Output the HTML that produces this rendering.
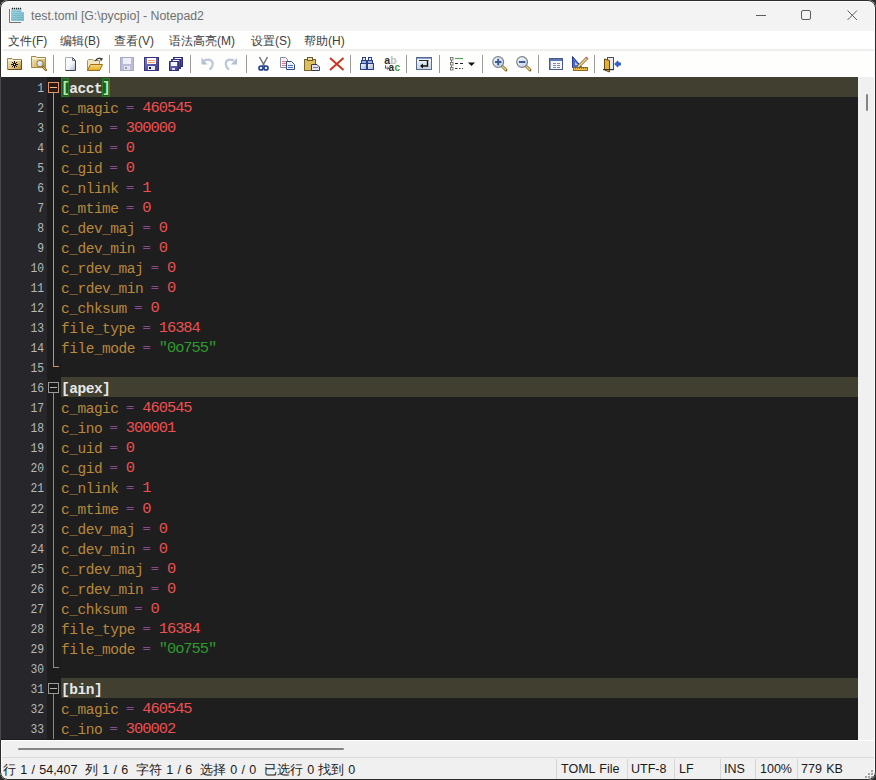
<!DOCTYPE html>
<html><head><meta charset="utf-8">
<style>
html,body{margin:0;padding:0;width:876px;height:780px;overflow:hidden;background:#2a2a2a;}
*{box-sizing:border-box;}
#frame{position:absolute;left:0;top:0;width:876px;height:780px;border:1px solid #2c2c2c;border-radius:8px;pointer-events:none;box-shadow:0 0 0 12px #2a2a2a;}
#win{position:absolute;left:0;top:0;width:876px;height:780px;overflow:hidden;background:#f0f0f0;font-family:"Liberation Sans",sans-serif;}
#title{position:absolute;left:0;top:0;width:876px;height:31px;background:#f3f3f3;}
#title .t{position:absolute;left:31px;top:9px;font-size:12.3px;color:#707070;white-space:nowrap;}
#menu{position:absolute;left:0;top:31px;width:876px;height:20px;background:#ffffff;border-bottom:2px solid #efefef;}
#menu span{position:absolute;top:2px;font-size:12px;color:#3c3c3c;white-space:nowrap;}
#tb{position:absolute;left:0;top:51px;width:876px;height:26px;background:#fefefd;}
#ed{position:absolute;left:1px;top:77px;width:857px;height:663px;background:#1e1e1e;overflow:hidden;}
#ln{position:absolute;left:0;top:0;width:46px;height:663px;background:#27272b;}
#fm{position:absolute;left:46px;top:0;width:14px;height:663px;background:#1c1c1c;}
.line{position:absolute;left:60px;height:20px;width:797px;font-family:"Liberation Mono",monospace;font-size:14.5px;letter-spacing:-0.48px;line-height:24px;white-space:pre;color:#c8883a;}
.num{position:absolute;left:0;width:43px;text-align:right;height:20px;font-family:"Liberation Mono",monospace;font-size:12.6px;line-height:24px;color:#b8b8b8;transform:scaleX(0.9);transform-origin:right center;}
.sec{background:#403f30;}
.k{color:#b8883c}.e{color:#cc70dc;position:relative;left:-1px;top:-1px;display:inline-block;transform:scaleY(0.62);}.n{color:#ec5050;position:relative;left:-1px;top:-1px;font-size:15.4px;letter-spacing:-1.02px}.s{color:#2e9a2e;position:relative;left:-1px;top:-1px;font-size:15.4px;letter-spacing:-1.02px}.h{color:#e8e8e8;font-weight:bold}
.bm{display:inline-block;width:8.22px;letter-spacing:0;height:19px;vertical-align:top;margin-top:1px;line-height:21px;background:#235a23;box-shadow:inset 0 0 0 1px #2a7a2a;color:#a8f0a8;font-weight:bold;text-align:center;}
.fb{position:absolute;left:47px;width:11px;height:11px;border:1px solid #9a9a9a;background:#1a1a1a;}
.fb:after{content:"";position:absolute;left:1px;top:4px;width:7px;height:1px;background:#b0b0b0;}
.fb.cur{border-color:#e0945e;background:#2a1c14;}
.fb.cur:after{background:#f0b890;}
.fl{position:absolute;left:52px;width:1px;}
.ft{position:absolute;left:52px;width:6px;height:1px;}
#vsb{position:absolute;left:858px;top:77px;width:18px;height:663px;background:#f0f0f0;}
#vthumb{position:absolute;left:8px;top:17px;width:2px;height:17px;background:#858585;border-radius:1px;}
#hsb{position:absolute;left:0;top:740px;width:876px;height:18px;background:#f0f0f0;}
#hthumb{position:absolute;left:18px;top:8px;width:326px;height:2px;background:#858585;border-radius:1px;}
#status{position:absolute;left:0;top:757px;width:876px;height:23px;background:#f0f0f0;border-top:1px solid #dadada;}
#status span{position:absolute;top:4px;font-size:12.5px;word-spacing:0.8px;color:#1a1a1a;white-space:nowrap;}
#status i{position:absolute;top:1px;width:1px;height:21px;background:#d6d6d6;}
</style></head><body>
<div id="win">
 <div id="title"><div class="t">test.toml [G:\pycpio] - Notepad2</div></div>
 <div id="menu">
  <span style="left:8px">文件(F)</span>
  <span style="left:60px">编辑(B)</span>
  <span style="left:114px">查看(V)</span>
  <span style="left:169px">语法高亮(M)</span>
  <span style="left:251px">设置(S)</span>
  <span style="left:304px">帮助(H)</span>
 </div>
 <div id="tb"></div>
 <div id="ed">
  <div id="ln"></div><div id="fm"></div>
<div class="num" style="top:0px">1</div>
<div class="line sec" style="top:0px"><span class="bm">[</span><span class="h">acct</span><span class="bm">]</span></div>
<div class="num" style="top:20px">2</div>
<div class="line" style="top:20px"><span class="k">c_magic</span> <span class="e">=</span> <span class="n">460545</span></div>
<div class="num" style="top:40px">3</div>
<div class="line" style="top:40px"><span class="k">c_ino</span> <span class="e">=</span> <span class="n">300000</span></div>
<div class="num" style="top:60px">4</div>
<div class="line" style="top:60px"><span class="k">c_uid</span> <span class="e">=</span> <span class="n">0</span></div>
<div class="num" style="top:80px">5</div>
<div class="line" style="top:80px"><span class="k">c_gid</span> <span class="e">=</span> <span class="n">0</span></div>
<div class="num" style="top:100px">6</div>
<div class="line" style="top:100px"><span class="k">c_nlink</span> <span class="e">=</span> <span class="n">1</span></div>
<div class="num" style="top:120px">7</div>
<div class="line" style="top:120px"><span class="k">c_mtime</span> <span class="e">=</span> <span class="n">0</span></div>
<div class="num" style="top:140px">8</div>
<div class="line" style="top:140px"><span class="k">c_dev_maj</span> <span class="e">=</span> <span class="n">0</span></div>
<div class="num" style="top:160px">9</div>
<div class="line" style="top:160px"><span class="k">c_dev_min</span> <span class="e">=</span> <span class="n">0</span></div>
<div class="num" style="top:180px">10</div>
<div class="line" style="top:180px"><span class="k">c_rdev_maj</span> <span class="e">=</span> <span class="n">0</span></div>
<div class="num" style="top:200px">11</div>
<div class="line" style="top:200px"><span class="k">c_rdev_min</span> <span class="e">=</span> <span class="n">0</span></div>
<div class="num" style="top:220px">12</div>
<div class="line" style="top:220px"><span class="k">c_chksum</span> <span class="e">=</span> <span class="n">0</span></div>
<div class="num" style="top:240px">13</div>
<div class="line" style="top:240px"><span class="k">file_type</span> <span class="e">=</span> <span class="n">16384</span></div>
<div class="num" style="top:260px">14</div>
<div class="line" style="top:260px"><span class="k">file_mode</span> <span class="e">=</span> <span class="s">"0o755"</span></div>
<div class="num" style="top:280px">15</div>
<div class="num" style="top:300px">16</div>
<div class="line sec" style="top:300px"><span class="h">[apex]</span></div>
<div class="num" style="top:320px">17</div>
<div class="line" style="top:320px"><span class="k">c_magic</span> <span class="e">=</span> <span class="n">460545</span></div>
<div class="num" style="top:340px">18</div>
<div class="line" style="top:340px"><span class="k">c_ino</span> <span class="e">=</span> <span class="n">300001</span></div>
<div class="num" style="top:360px">19</div>
<div class="line" style="top:360px"><span class="k">c_uid</span> <span class="e">=</span> <span class="n">0</span></div>
<div class="num" style="top:380px">20</div>
<div class="line" style="top:380px"><span class="k">c_gid</span> <span class="e">=</span> <span class="n">0</span></div>
<div class="num" style="top:400px">21</div>
<div class="line" style="top:400px"><span class="k">c_nlink</span> <span class="e">=</span> <span class="n">1</span></div>
<div class="num" style="top:421px">22</div>
<div class="line" style="top:421px"><span class="k">c_mtime</span> <span class="e">=</span> <span class="n">0</span></div>
<div class="num" style="top:441px">23</div>
<div class="line" style="top:441px"><span class="k">c_dev_maj</span> <span class="e">=</span> <span class="n">0</span></div>
<div class="num" style="top:461px">24</div>
<div class="line" style="top:461px"><span class="k">c_dev_min</span> <span class="e">=</span> <span class="n">0</span></div>
<div class="num" style="top:481px">25</div>
<div class="line" style="top:481px"><span class="k">c_rdev_maj</span> <span class="e">=</span> <span class="n">0</span></div>
<div class="num" style="top:501px">26</div>
<div class="line" style="top:501px"><span class="k">c_rdev_min</span> <span class="e">=</span> <span class="n">0</span></div>
<div class="num" style="top:521px">27</div>
<div class="line" style="top:521px"><span class="k">c_chksum</span> <span class="e">=</span> <span class="n">0</span></div>
<div class="num" style="top:541px">28</div>
<div class="line" style="top:541px"><span class="k">file_type</span> <span class="e">=</span> <span class="n">16384</span></div>
<div class="num" style="top:561px">29</div>
<div class="line" style="top:561px"><span class="k">file_mode</span> <span class="e">=</span> <span class="s">"0o755"</span></div>
<div class="num" style="top:581px">30</div>
<div class="num" style="top:601px">31</div>
<div class="line sec" style="top:601px"><span class="h">[bin]</span></div>
<div class="num" style="top:621px">32</div>
<div class="line" style="top:621px"><span class="k">c_magic</span> <span class="e">=</span> <span class="n">460545</span></div>
<div class="num" style="top:641px">33</div>
<div class="line" style="top:641px"><span class="k">c_ino</span> <span class="e">=</span> <span class="n">300002</span></div>
<div class="num" style="top:661px">34</div>
<div class="line" style="top:661px"><span class="k">c_uid</span> <span class="e">=</span> <span class="n">0</span></div>
<div class="fb cur" style="top:5px"></div>
<div class="fb" style="top:305px"></div>
<div class="fb" style="top:606px"></div>
<div class="fl" style="top:16px;height:274px;background:#dc8a5c"></div>
<div class="ft" style="top:289px;background:#dc8a5c"></div>
<div class="fl" style="top:316px;height:275px;background:#8a8a8a"></div>
<div class="ft" style="top:590px;background:#8a8a8a"></div>
<div class="fl" style="top:617px;height:83px;background:#8a8a8a"></div>

 </div>
 <div id="vsb"><div id="vthumb"></div></div>
 <div id="hsb"><div id="hthumb"></div></div>
 <div id="status">
  <span style="left:3px">行 1 / 54,407</span>
  <span style="left:85px">列 1 / 6</span>
  <span style="left:136px">字符 1 / 6</span>
  <span style="left:200px">选择 0 / 0</span>
  <span style="left:264px">已选行 0</span>
  <span style="left:318px">找到 0</span>
  <i style="left:556px"></i><i style="left:627px"></i><i style="left:674px"></i><i style="left:720px"></i><i style="left:755px"></i><i style="left:797px"></i>
  <span style="left:561px">TOML File</span>
  <span style="left:631px">UTF-8</span>
  <span style="left:679px">LF</span>
  <span style="left:724px">INS</span>
  <span style="left:760px">100%</span>
  <span style="left:801px">779 KB</span>
  <b style="position:absolute;left:871px;top:12px;width:2px;height:2px;background:#a4a4a4"></b><b style="position:absolute;left:868px;top:15px;width:2px;height:2px;background:#a4a4a4"></b><b style="position:absolute;left:871px;top:15px;width:2px;height:2px;background:#a4a4a4"></b><b style="position:absolute;left:865px;top:18px;width:2px;height:2px;background:#a4a4a4"></b><b style="position:absolute;left:868px;top:18px;width:2px;height:2px;background:#a4a4a4"></b><b style="position:absolute;left:871px;top:18px;width:2px;height:2px;background:#a4a4a4"></b>
 </div>
<svg id="icons" width="876" height="80" viewBox="0 0 876 80" style="position:absolute;left:0;top:0;">
<defs>
<linearGradient id="gFold" x1="0" y1="0" x2="1" y2="1"><stop offset="0" stop-color="#f4ebc4"/><stop offset="0.6" stop-color="#dcc27a"/><stop offset="1" stop-color="#b58a2c"/></linearGradient>
<linearGradient id="gFlap" x1="0" y1="0" x2="0" y2="1"><stop offset="0" stop-color="#f8dc7a"/><stop offset="1" stop-color="#e0a820"/></linearGradient>
<linearGradient id="gDoc" x1="0" y1="0" x2="1" y2="1"><stop offset="0" stop-color="#ffffff"/><stop offset="0.55" stop-color="#f2f4f8"/><stop offset="1" stop-color="#aab2c8"/></linearGradient>
<linearGradient id="gDisk" x1="0" y1="0" x2="1" y2="1"><stop offset="0" stop-color="#7c7cc8"/><stop offset="1" stop-color="#3a3a8c"/></linearGradient>
<linearGradient id="gLens" x1="0" y1="0" x2="1" y2="1"><stop offset="0" stop-color="#ffffff"/><stop offset="1" stop-color="#b8cce0"/></linearGradient>
<linearGradient id="gWin" x1="0" y1="0" x2="0" y2="1"><stop offset="0" stop-color="#f8fafd"/><stop offset="1" stop-color="#c6d2e6"/></linearGradient>
<linearGradient id="gNote" x1="0" y1="0" x2="1" y2="1"><stop offset="0" stop-color="#a8d8e4"/><stop offset="1" stop-color="#78bccc"/></linearGradient>
</defs>
<!-- title icon -->
<path d="M9.5 9 V22.5 H21" fill="none" stroke="#707070" stroke-width="1"/>
<rect x="10" y="9" width="1" height="13" fill="#ffffff"/>
<path d="M11 8 H21.5 V12 H24 V21 H11 Z" fill="url(#gNote)"/>
<path d="M11.5 11.5H21M11.5 13.5H23.5M11.5 15.5H23.5M11.5 17.5H23.5M11.5 19.5H23.5" stroke="#6aaabb" stroke-width="0.7" opacity="0.7"/>
<path d="M12 8.5h1M14 8.5h1M16 8.5h1M18 8.5h1M20 8.5h1" stroke="#222" stroke-width="1.4"/>
<!-- window buttons -->
<path d="M756 15.5H766" stroke="#5c5c5c" stroke-width="1"/>
<rect x="801.5" y="10.5" width="9" height="9" rx="1.5" fill="none" stroke="#5c5c5c" stroke-width="1"/>
<path d="M847.5 10.5L857 20M857 10.5L847.5 20" stroke="#5c5c5c" stroke-width="1"/>

<!-- 1 folder star -->
<path d="M7.5 69.5 V58.5 H12 L13 59.5 H21.5 V69.5 Z" fill="url(#gFold)" stroke="#a08850"/>
<path d="M8 60.5H21" stroke="#fff8e0" stroke-width="1"/>
<path d="M8 69.5H21.5V60" fill="none" stroke="#6a5020" stroke-width="1"/>
<path d="M14 61h1v1h-1zM14 62h1v1h-1zM14 63h1v1h-1zM14 64h1v1h-1zM14 65h1v1h-1zM14 66h1v1h-1zM14 67h1v1h-1zM11 64h1v1h-1zM12 64h1v1h-1zM13 64h1v1h-1zM14 64h1v1h-1zM15 64h1v1h-1zM16 64h1v1h-1zM17 64h1v1h-1zM12 62h1v1h-1zM13 63h1v1h-1zM15 65h1v1h-1zM16 66h1v1h-1zM16 62h1v1h-1zM15 63h1v1h-1zM13 65h1v1h-1zM12 66h1v1h-1z" fill="#1a1208"/>
<rect x="14" y="64" width="1" height="1" fill="#fff"/>
<!-- 2 folder search -->
<path d="M31.5 67.5 V56.5 H36 L37 57.5 H45.5 V67.5 Z" fill="url(#gFold)" stroke="#a08850"/>
<path d="M32 58.5H45" stroke="#fff8e0" stroke-width="1"/>
<path d="M42.8 66.8 L46 70" stroke="#8a6a18" stroke-width="2.4" stroke-linecap="round"/>
<path d="M43 67 L45.6 69.6" stroke="#e8d080" stroke-width="1"/>
<circle cx="40" cy="63.6" r="3.1" fill="url(#gLens)" stroke="#9a8048" stroke-width="1.1"/>
<!-- sep -->
<rect x="53" y="55" width="1" height="18" fill="#9a9a9a"/>
<!-- 3 new doc -->
<path d="M65.5 70.5 V57.5 H72.5 L75.5 60.5 V70.5 Z" fill="url(#gDoc)"/>
<path d="M65.5 70.5 V57.5 H72.5" fill="none" stroke="#a8acb4"/>
<path d="M72.5 57.5 L75.5 60.5 V70.5 H65.5" fill="none" stroke="#3a4050"/>
<path d="M72.5 58 V60.5 H75" fill="none" stroke="#6a7080"/>
<!-- 4 open folder -->
<path d="M87.5 70.5 V60.5 L88.5 59.5 H92.5 L93.5 60.5 H99.5 V70.5 Z" fill="#f2e6c0" stroke="#a09470"/>
<path d="M87.5 70.5 L90.5 64.5 H102.5 L99.5 70.5 Z" fill="url(#gFlap)" stroke="#9a7020"/>
<path d="M95.5 61 Q97 57.5 100.5 58.5" fill="none" stroke="#3a3a3a" stroke-width="1.2"/>
<path d="M99.5 57.5 L103 58.5 L101 61.5 Z" fill="#3a3a3a"/>
<!-- sep -->
<rect x="109" y="55" width="1" height="18" fill="#9a9a9a"/>
<!-- 7 save disabled -->
<rect x="120.5" y="57.5" width="13" height="13" fill="#bcbcd6" stroke="#a8a8c8"/>
<rect x="123" y="58" width="8" height="6" fill="#eeeef6"/>
<rect x="124" y="66" width="6" height="4" fill="#e4e4ee"/>
<rect x="125" y="67" width="2" height="2" fill="#9a9ab4"/>
<!-- 8 save -->
<rect x="144.5" y="57.5" width="14" height="13" fill="url(#gDisk)" stroke="#34347c"/>
<rect x="147" y="58" width="9" height="6" fill="#fffaf4"/>
<path d="M148 60.5H155M148 62.5H155" stroke="#e8a070" stroke-width="1"/>
<rect x="148" y="66" width="7" height="4" fill="#e8e8f4"/>
<rect x="149" y="67" width="2" height="2" fill="#101030"/>
<!-- 9 save all -->
<rect x="173.5" y="57.5" width="9" height="9" fill="url(#gDisk)" stroke="#303078"/>
<rect x="171.5" y="59.5" width="9" height="9" fill="url(#gDisk)" stroke="#303078"/>
<rect x="169.5" y="61.5" width="9" height="9" fill="url(#gDisk)" stroke="#303078"/>
<rect x="171" y="62" width="6" height="4" fill="#f4f4fa"/>
<rect x="175" y="58" width="6" height="1" fill="#f4f4fa"/>
<rect x="173" y="60" width="6" height="1" fill="#f4f4fa"/>
<rect x="172" y="68" width="3" height="2" fill="#d8d8ec"/>
<!-- sep -->
<rect x="190" y="55" width="1" height="18" fill="#9a9a9a"/>
<!-- 11 undo -->
<path d="M204 60.5 Q210 58 212.5 62 Q213.5 66.5 209.5 69.5" fill="none" stroke="#bcc6d8" stroke-width="2.2"/>
<path d="M201.5 57.5 V64.5 H207.5 Z" fill="#b4c0d6"/>
<!-- 12 redo -->
<path d="M234 60.5 Q228 58 226 62 Q225 66.5 229 69.5" fill="none" stroke="#bcc6d8" stroke-width="2.2"/>
<path d="M237 58 V64.5 H231 Z" fill="#b4c0d6"/>
<!-- sep -->
<rect x="246" y="55" width="1" height="18" fill="#9a9a9a"/>
<!-- 14 cut -->
<path d="M259.5 57 L264.5 66 M267.5 57 L262.5 66" stroke="#6a6a72" stroke-width="1.4"/>
<circle cx="261" cy="68" r="2.1" fill="#dfe8f6" stroke="#1e3a8a" stroke-width="1.5"/>
<circle cx="266" cy="68" r="2.1" fill="#dfe8f6" stroke="#1e3a8a" stroke-width="1.5"/>
<!-- 15 copy -->
<path d="M280.5 57.5 H285.5 L287.5 59.5 V67.5 H280.5 Z" fill="#f6f2f2" stroke="#8a8aa0"/>
<path d="M282 61.5H286M282 63.5H286M282 65.5H286" stroke="#e07070" stroke-width="0.9"/>
<path d="M286.5 61.5 H291.5 L294.5 64.5 V69.5 H286.5 Z" fill="#eef2fa" stroke="#2e4a8e"/>
<path d="M288 65.5H293M288 67.5H293" stroke="#3a62b0" stroke-width="0.9"/>
<!-- 16 paste -->
<rect x="304.5" y="59.5" width="11" height="11" fill="#dcc060" stroke="#7a6428"/>
<rect x="307.5" y="57.5" width="5" height="3" fill="#f0e2a8" stroke="#6a5a30"/>
<path d="M311.5 64.5 H317 L319.5 67 V70.5 H311.5 Z" fill="#dde2ee" stroke="#3a3a48"/>
<path d="M313 67.5H318" stroke="#6070a0" stroke-width="0.9"/>
<!-- 17 delete -->
<path d="M330 58 L343.5 70 M343.5 58 L330 70" stroke="#d0301e" stroke-width="1.9"/>
<!-- sep -->
<rect x="350" y="55" width="1" height="18" fill="#9a9a9a"/>
<!-- 19 find -->
<linearGradient id="gBino" x1="0" y1="0" x2="1" y2="1"><stop offset="0" stop-color="#ffffff"/><stop offset="1" stop-color="#98acdc"/></linearGradient>
<rect x="362.5" y="57.5" width="3" height="3" fill="#e4ecfa" stroke="#2a3e86"/>
<rect x="368.5" y="57.5" width="3" height="3" fill="#e4ecfa" stroke="#2a3e86"/>
<rect x="361.5" y="60.5" width="5" height="3" fill="#9ab0e0" stroke="#2a3e86"/>
<rect x="367.5" y="60.5" width="5" height="3" fill="#9ab0e0" stroke="#2a3e86"/>
<rect x="360.5" y="63.5" width="6" height="6" fill="url(#gBino)" stroke="#2a3e86"/>
<rect x="367.5" y="63.5" width="6" height="6" fill="url(#gBino)" stroke="#2a3e86"/>
<rect x="366" y="62" width="2" height="2" fill="#2a3e86"/>
<!-- 20 replace -->
<text x="384.2" y="64" font-family="Liberation Sans" font-size="10.5" font-weight="bold" fill="#303030">a</text>
<text x="390.2" y="64" font-family="Liberation Sans" font-size="10.5" font-weight="bold" fill="#c0c0c0">b</text>
<path d="M385.5 65.3 V68.2 H388" fill="none" stroke="#404040" stroke-width="0.9"/>
<path d="M387.3 66.9 L388.8 68.2 L387.3 69.5" fill="none" stroke="#404040" stroke-width="0.9"/>
<text x="388.6" y="70.8" font-family="Liberation Sans" font-size="10" font-weight="bold" fill="#282828">a</text>
<text x="394.4" y="70.8" font-family="Liberation Sans" font-size="10" font-weight="bold" fill="#3a9a3a">c</text>
<!-- sep -->
<rect x="406" y="55" width="1" height="18" fill="#9a9a9a"/>
<!-- 22 word wrap -->
<rect x="416.5" y="57.5" width="15" height="12" fill="url(#gWin)" stroke="#5a6a8a"/>
<rect x="417" y="58" width="14" height="1" fill="#8aa0c8"/>
<path d="M419 60.5H428.5" stroke="#2a2a2a" stroke-width="1"/>
<path d="M427.5 61 V66 H421" fill="none" stroke="#111" stroke-width="1.4"/>
<path d="M423 63.5 L420 66 L423 68.5 Z" fill="#111"/>
<!-- sep -->
<rect x="439" y="55" width="1" height="18" fill="#9a9a9a"/>
<!-- 24 fold list -->
<path d="M451.5 60V62.5M451.5 65.5V68" stroke="#707070" stroke-width="1"/>
<rect x="450.5" y="57.5" width="2.5" height="2.5" fill="#fff" stroke="#707070" stroke-width="0.9"/>
<rect x="450.5" y="62.5" width="2.5" height="2.5" fill="#fff" stroke="#707070" stroke-width="0.9"/>
<rect x="450.5" y="67.5" width="2.5" height="2.5" fill="#fff" stroke="#707070" stroke-width="0.9"/>
<path d="M455 58.5H463" stroke="#50a050" stroke-width="1.1"/>
<path d="M455 63.5H458M460 63.5H463" stroke="#222" stroke-width="1.1"/>
<path d="M455 68.5H457.5M459 68.5H460.5M462 68.5H463" stroke="#533" stroke-width="1.1"/>
<path d="M468 62.5 H475 L471.5 66 Z" fill="#111"/>
<!-- sep -->
<rect x="482" y="55" width="1" height="18" fill="#9a9a9a"/>
<!-- 26 zoom in -->
<path d="M502 66 L506 70" stroke="#8a7028" stroke-width="3" stroke-linecap="round"/>
<path d="M502.2 66.2 L505.5 69.5" stroke="#e2d28a" stroke-width="1.4" stroke-linecap="round"/>
<circle cx="498.2" cy="62" r="5.4" fill="url(#gLens)" stroke="#7a7f8a" stroke-width="1.2"/>
<path d="M495 62H501.4M498.2 58.8V65.2" stroke="#3a5a96" stroke-width="2"/>
<!-- 27 zoom out -->
<path d="M526 66 L530 70" stroke="#8a7028" stroke-width="3" stroke-linecap="round"/>
<path d="M526.2 66.2 L529.5 69.5" stroke="#e2d28a" stroke-width="1.4" stroke-linecap="round"/>
<circle cx="522.1" cy="62" r="5.4" fill="url(#gLens)" stroke="#7a7f8a" stroke-width="1.2"/>
<path d="M518.9 62H525.3" stroke="#3a5a96" stroke-width="2"/>
<!-- sep -->
<rect x="538" y="55" width="1" height="18" fill="#9a9a9a"/>
<!-- 29 scheme -->
<rect x="549.5" y="58.5" width="13" height="11" fill="#f2f5fa" stroke="#4a5a88"/>
<rect x="550" y="59" width="12" height="2" fill="#5a78b8"/>
<rect x="550" y="61" width="1" height="8" fill="#8aa0d0"/>
<path d="M553 63.5H556M557 63.5H560M553 65.5H556M557 65.5H560M553 67.5H556M557 67.5H560" stroke="#7a7a8a" stroke-width="0.9"/>
<!-- 30 ruler pencil -->
<path d="M572.5 56.5 V67.5 H582 Z" fill="#4a6ad0" stroke="#2a3a8a"/>
<path d="M575 62 V65 H578 Z" fill="#c8d4f4"/>
<path d="M578 67 L587 58" stroke="#806020" stroke-width="3"/>
<path d="M578 67 L587 58" stroke="#f0d890" stroke-width="1.6"/>
<path d="M586 57 L588 59" stroke="#d06070" stroke-width="1.5"/>
<rect x="573.5" y="67.5" width="14" height="3" fill="#e8c050" stroke="#8a6a20"/>
<path d="M575.5 68V69M577.5 68V69M579.5 68V69M581.5 68V69M583.5 68V69M585.5 68V69" stroke="#8a6a20" stroke-width="0.8"/>
<!-- sep -->
<rect x="594" y="55" width="1" height="18" fill="#9a9a9a"/>
<!-- 32 exit -->
<rect x="607.5" y="57.5" width="6" height="12" fill="#e8ecf0" stroke="#505050"/>
<path d="M604.5 59 L609.5 60.5 V72 L604.5 70 Z" fill="#e6b030" stroke="#6a4a10"/>
<rect x="603" y="69" width="11" height="1.2" fill="#333"/>
<path d="M614.5 64 L618 60.8 V62.8 H620.5 V65.2 H618 V67.2 Z" fill="#2a6ad8" stroke="#1a3a90" stroke-width="0.6"/>
</svg>

<div style="position:absolute;left:7px;top:1px;width:862px;height:1px;background:#fdfdfd"></div>
<div style="position:absolute;left:1px;top:7px;width:1px;height:70px;background:#fdfdfd"></div>
<div style="position:absolute;left:874px;top:7px;width:1px;height:766px;background:#fcfcfc"></div>
<div style="position:absolute;left:1px;top:740px;width:874px;height:1px;background:#ffffff"></div>
<div style="position:absolute;left:1px;top:740px;width:1px;height:33px;background:#fcfcfc"></div>
<div style="position:absolute;left:1px;top:739px;width:857px;height:1px;background:#1c1c1e"></div>
</div>
<div id="frame"></div>
<div style="position:absolute;left:0;top:77px;width:1px;height:663px;background:#4a4a4c"></div>
</body></html>
